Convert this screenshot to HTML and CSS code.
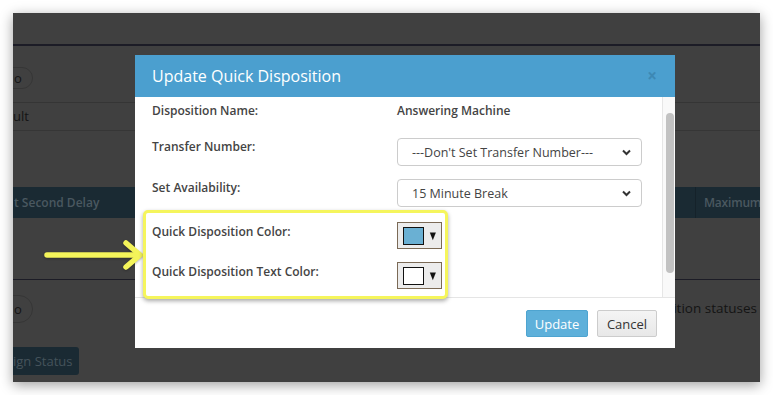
FILE: index.html
```html
<!DOCTYPE html>
<html>
<head>
<meta charset="utf-8">
<link rel="stylesheet" href="styles.css">
</head>
<body>
<div class="frame">
  <div class="topbar"></div>
  <div class="row-a"><span class="pill">o</span></div>
  <div class="row-b"><span class="dimtext">ult</span></div>
  <div class="band">
    <span class="band-left">t Second Delay</span>
    <span class="band-right">Maximum</span>
  </div>
  <div class="row-c">
    <span class="pill">o</span>
    <span class="dimtext">osition statuses</span>
  </div>
  <div class="row-d"><span class="navbtn">ign Status</span></div>

  <div class="modal">
    <div class="modal-header">
      <span class="modal-title">Update Quick Disposition</span>
      <span class="modal-close">×</span>
    </div>
    <div class="modal-body">
      <div class="content">
        <div class="field field-name">
          <span class="label">Disposition Name:</span>
          <span class="value">Answering Machine</span>
        </div>
        <div class="field field-select">
          <span class="label">Transfer Number:</span>
          <div class="select"><span>---Don't Set Transfer Number---</span>
            <svg class="chev" width="9" height="7" viewBox="0 0 9 7"><path d="M1 1.5 L4.5 5 L8 1.5" fill="none" stroke="#333" stroke-width="2"/></svg>
          </div>
        </div>
        <div class="field field-select">
          <span class="label">Set Availability:</span>
          <div class="select"><span>15 Minute Break</span>
            <svg class="chev" width="9" height="7" viewBox="0 0 9 7"><path d="M1 1.5 L4.5 5 L8 1.5" fill="none" stroke="#333" stroke-width="2"/></svg>
          </div>
        </div>
        <div class="highlight">
          <div class="field field-color">
            <span class="label">Quick Disposition Color:</span>
            <div class="swatch-btn"><span class="swatch swatch-blue"></span><span class="tri">▼</span></div>
          </div>
          <div class="field field-color">
            <span class="label">Quick Disposition Text Color:</span>
            <div class="swatch-btn"><span class="swatch swatch-white"></span><span class="tri">▼</span></div>
          </div>
        </div>
      </div>
      <div class="scrollbar"><div class="thumb"></div></div>
    </div>
    <div class="modal-footer">
      <button class="btn btn-primary">Update</button>
      <button class="btn btn-default">Cancel</button>
    </div>
  </div>
</div>
<svg class="arrow" width="110" height="34" viewBox="0 0 110 34">
  <g fill="none" stroke="#f4f45a" stroke-width="5.5" stroke-linecap="round" stroke-linejoin="miter">
    <path d="M7 17 L99 17"/>
    <path d="M86 5 L100 17 L86 29"/>
  </g>
</svg>
</body>
</html>
```
FILE: styles.css
```css
html, body {
  margin: 0;
  padding: 0;
  background: #ffffff;
  width: 773px;
  height: 395px;
  overflow: hidden;
  font-family: "Open Sans", "Liberation Sans", sans-serif;
}
body {
  position: relative;
}
.frame {
  position: relative;
  margin: 13px 0 0 13px;
  width: 747px;
  height: 369px;
  background: #404040;
  overflow: hidden;
  box-shadow: 0 3px 12px rgba(0,0,0,0.38);
  color: #1a1a1a;
  font-size: 13px;
}
.topbar {
  height: 31px;
  border-bottom: 2px solid #1c1c26;
}
.row-a {
  height: 57px;
  padding-top: 21px;
  box-sizing: border-box;
  border-bottom: 1px solid #353535;
}
.pill {
  display: inline-block;
  box-sizing: border-box;
  height: 22px;
  line-height: 20px;
  padding: 0 10px 0 22px;
  margin-left: -22px;
  border: 1px solid #363636;
  border-radius: 11px;
  color: #141414;
  font-size: 13px;
}
.row-b {
  height: 28px;
  line-height: 27px;
  box-sizing: border-box;
  border-bottom: 1px solid #363636;
}
.dimtext {
  color: #141414;
  font-size: 13px;
}
.band {
  margin-top: 56px;
  height: 31px;
  background: #1a2a33;
  display: flex;
  align-items: center;
  justify-content: space-between;
  font-weight: 600;
  font-size: 12px;
  color: #4a5860;
}
.band-left {
  padding-left: 1px;
}
.band-right {
  align-self: stretch;
  display: flex;
  align-items: center;
  padding-left: 8px;
  width: 56px;
  border-left: 1px solid #15222a;
  white-space: nowrap;
  font-size: 12px;
  letter-spacing: -0.2px;
}
.row-c {
  margin-top: 61px;
  border-top: 1px solid #1c1c26;
  height: 51px;
  padding-top: 15px;
  box-sizing: border-box;
  display: flex;
  justify-content: space-between;
  align-items: flex-start;
}
.row-c .pill {
  height: 28px;
  line-height: 26px;
  border-radius: 14px;
}
.row-c .dimtext {
  margin-top: 4px;
  margin-right: 3px;
  font-size: 13.5px;
}
.row-d {
  margin-top: 17px;
}
.navbtn {
  display: inline-block;
  height: 28px;
  line-height: 28px;
  padding: 0 7px 0 20px;
  margin-left: -20px;
  background: #1a2a33;
  border-radius: 3px;
  color: #45535b;
  font-size: 13px;
}

/* modal */
.modal {
  position: absolute;
  left: 122px;
  top: 42px;
  width: 540px;
  height: 293px;
  background: #ffffff;
  display: flex;
  flex-direction: column;
}
.modal-header {
  height: 42px;
  flex: none;
  background: #4b9fcf;
  display: flex;
  align-items: center;
  justify-content: space-between;
  padding: 0 18px 0 17px;
}
.modal-title {
  color: #ffffff;
  font-size: 16px;
  margin-top: -1px;
}
.modal-close {
  color: #3d88b4;
  font-size: 17px;
  font-weight: 700;
  margin-top: -2px;
}
.modal-body {
  height: 200px;
  flex: none;
  display: flex;
}
.content {
  flex: 1;
  padding: 5px 0 0 17px;
}
.field {
  display: flex;
  align-items: flex-start;
  color: #444444;
  font-size: 12px;
}
.label {
  width: 245px;
  font-weight: 600;
  line-height: 17px;
}
.field-name {
  height: 17px;
  margin-bottom: 19px;
}
.value {
  font-weight: 600;
  line-height: 17px;
}
.field-select {
  height: 28px;
  margin-bottom: 13px;
}
.select {
  box-sizing: border-box;
  width: 245px;
  height: 28px;
  border: 1px solid #cccccc;
  border-radius: 4px;
  display: flex;
  align-items: center;
  justify-content: space-between;
  padding: 0 10px 0 14px;
  font-size: 12.5px;
  color: #444444;
}
.chev {
  margin-top: 1px;
}
.highlight {
  position: relative;
  z-index: 2;
  margin: -10px 0 0 -9px;
  width: 305px;
  box-sizing: border-box;
  border: 3px solid #f5f55c;
  border-radius: 5px;
  background: #ffffff;
  padding: 9px 0 7px 6px;
  box-shadow: 0 2px 4px rgba(0,0,0,0.35);
}
.field-color {
  height: 27px;
}
.field-color + .field-color {
  margin-top: 13px;
}
.field-color .label {
  margin-top: 1px;
}
.swatch-btn {
  box-sizing: border-box;
  width: 45px;
  height: 27px;
  background: #ececec;
  border: 1px solid #7b6a56;
  display: flex;
  align-items: center;
  padding-left: 5px;
}
.swatch {
  box-sizing: border-box;
  width: 21px;
  height: 18px;
  border: 1px solid #111111;
}
.swatch-blue {
  background: #6ab0d3;
}
.swatch-white {
  background: #ffffff;
}
.tri {
  font-family: "DejaVu Sans", sans-serif;
  font-size: 10px;
  line-height: 10px;
  color: #111111;
  margin-left: 5px;
  transform: scaleX(0.8);
}
.scrollbar {
  width: 13px;
  flex: none;
  border-left: 1px solid #e6e6e6;
  background: #f9f9f9;
  padding: 16px 0 0 3px;
  box-sizing: border-box;
}
.thumb {
  width: 8px;
  height: 160px;
  border-radius: 4px;
  background: #c2c2c2;
}
.modal-footer {
  flex: 1;
  border-top: 1px solid #e5e5e5;
  display: flex;
  justify-content: flex-end;
  align-items: flex-start;
  gap: 9px;
  padding: 12px 18px 0 0;
}
.btn {
  font-family: "Open Sans", "Liberation Sans", sans-serif;
  font-size: 13px;
  height: 27px;
  border-radius: 2px;
  padding: 0;
  margin: 0;
}
.btn-primary {
  width: 62px;
  background: #5eb0da;
  border: 1px solid #4ea4d0;
  color: #ffffff;
}
.btn-default {
  width: 60px;
  background: linear-gradient(#f4f4f4, #e8e8e8);
  border: 1px solid #cccccc;
  color: #333333;
}
.arrow {
  position: absolute;
  left: 40px;
  top: 238px;
  filter: drop-shadow(0 1px 1px rgba(0,0,0,0.3));
}
```
